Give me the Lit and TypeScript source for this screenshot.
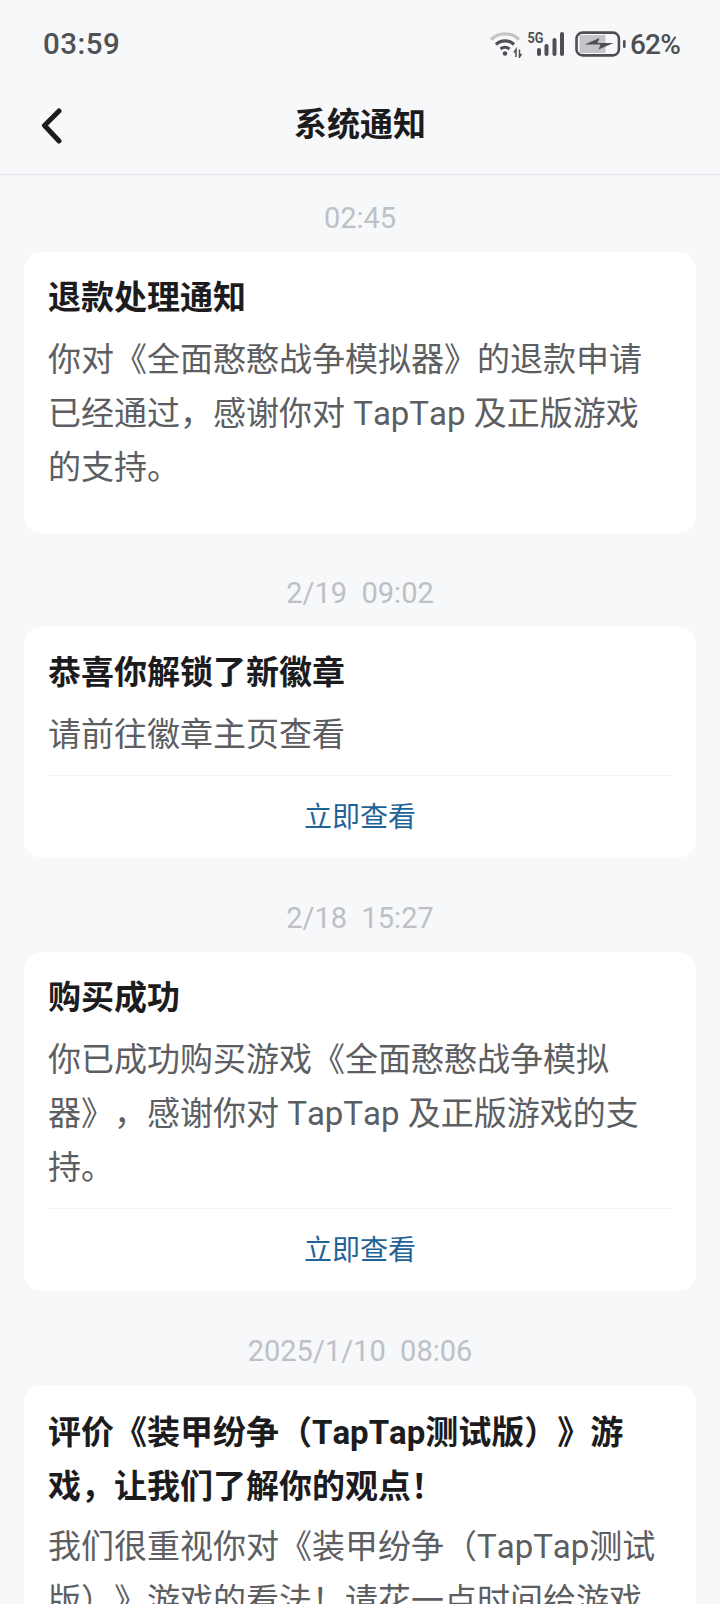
import { LitElement, html, css } from "lit";
import { customElement } from "lit/decorators.js";
import { classMap } from "lit/directives/class-map.js";

interface Item {
  time: string;
  title: string;
  body: string;
  link?: boolean;
  mixed?: boolean;
}

const ITEMS: Item[] = [
  {
    time: "02:45",
    title: "退款处理通知",
    body: "你对《全面憨憨战争模拟器》的退款申请已经通过，感谢你对 TapTap 及正版游戏的支持。",
  },
  { time: "2/19  09:02", title: "恭喜你解锁了新徽章", body: "请前往徽章主页查看", link: true },
  {
    time: "2/18  15:27",
    title: "购买成功",
    body: "你已成功购买游戏《全面憨憨战争模拟器》，感谢你对 TapTap 及正版游戏的支持。",
    link: true,
  },
  {
    time: "2025/1/10  08:06",
    title: "评价《装甲纷争（TapTap测试版）》游戏，让我们了解你的观点！",
    body: "我们很重视你对《装甲纷争（TapTap测试版）》游戏的看法！请花一点时间给游戏评价吧。",
    mixed: true,
  },
];

@customElement("app-root")
export class AppRoot extends LitElement {
  static styles = css`
    :host {
      display: block;
      height: 1604px;
      overflow: hidden;
      background: #f7f8fa;
      font-family: "Roboto", "Noto Sans CJK SC", sans-serif;
      text-spacing-trim: space-all;
      font-kerning: none;
    }
    .status {
      height: 88px;
      display: flex;
      align-items: center;
      justify-content: space-between;
      padding: 0 40px 0 43px;
      color: #4d4f52;
    }
    .clock {
      font-size: 29.5px;
      font-weight: 500;
      letter-spacing: 0.5px;
      color: #505255;
    }
    .icons {
      display: flex;
      align-items: center;
      gap: 3px;
    }
    .pct {
      font-size: 28px;
      font-weight: 500;
      letter-spacing: -0.8px;
    }
    .nav {
      height: 87px;
      box-sizing: border-box;
      border-bottom: 1px solid #e6e7ea;
      display: flex;
      align-items: center;
      justify-content: center;
      position: relative;
      padding-bottom: 18px;
    }
    .back {
      position: absolute;
      left: 40px;
      top: 18px;
    }
    .nav-title {
      font-size: 33px;
      font-weight: 700;
      color: #1c1c1e;
    }
    .list {
      padding: 0 24px;
    }
    .time {
      height: 77px;
      box-sizing: border-box;
      padding-top: 8px;
      display: flex;
      align-items: center;
      justify-content: center;
      white-space: pre;
      font-size: 29px;
      color: #bdc1c7;
    }
    .card {
      background: #fff;
      border-radius: 18px;
      margin-bottom: 17px;
      padding: 19px 24px 0;
    }
    .title {
      font-size: 33px;
      line-height: 54px;
      font-weight: 700;
      color: #1c1c1e;
      padding-right: 4px;
    }
    .title.mixed {
      padding-top: 2px;
      margin-bottom: -2px;
    }
    .body {
      font-size: 33px;
      line-height: 54px;
      color: #5c5e62;
      padding: 8px 4px 0 0;
    }
    .plain {
      height: 38px;
    }
    .link {
      margin-top: 13px;
      border-top: 1px solid #f0f1f3;
      height: 83px;
      box-sizing: border-box;
      padding-bottom: 5px;
      display: flex;
      align-items: center;
      justify-content: center;
      font-size: 28px;
      color: #1f6397;
    }
  `;

  render() {
    return html`
      <div class="status">
        <span class="clock">03:59</span>
        <div class="icons">
          <svg width="140" height="28" viewBox="0 0 140 28">
            <path d="M4 9.5 A 20 20 0 0 1 32 9.5" fill="none" stroke="#c4c5c7" stroke-width="3.2"/>
            <path d="M9 14.5 A 13 13 0 0 1 27 14.5" fill="none" stroke="#4d4f52" stroke-width="3.2"/>
            <path d="M13.5 19 A 7 7 0 0 1 22.5 19" fill="none" stroke="#4d4f52" stroke-width="3"/>
            <circle cx="18" cy="23.5" r="2.3" fill="#4d4f52"/>
            <path d="M29 27V19.5l-2 3M32.5 19.5v7.5l2-3" fill="none" stroke="#4d4f52" stroke-width="1.5"/>
            <text x="40.5" y="13" font-size="14" font-weight="700" fill="#4d4f52" font-family="Roboto" textLength="16" lengthAdjust="spacingAndGlyphs">5G</text>
            <rect x="50" y="18" width="4" height="8" rx="2" fill="#4d4f52"/>
            <rect x="57.5" y="14" width="4" height="12" rx="2" fill="#4d4f52"/>
            <rect x="65.5" y="8" width="4" height="18" rx="2" fill="#4d4f52"/>
            <rect x="73" y="2" width="4" height="24" rx="2" fill="#4d4f52"/>
            <rect x="89.5" y="2.6" width="42.4" height="22.8" rx="6" fill="none" stroke="#4d4f52" stroke-width="2.6"/>
            <path d="M92.5 5h26v18h-26z" fill="#c4c5c7"/>
            <path d="M97.5 14.5l15-6.5-2 5h16l-15 6.5 2-5z" fill="#4d4f52"/>
            <rect x="136" y="10" width="2.6" height="8" rx="1.3" fill="#4d4f52"/>
          </svg>
          <span class="pct">62%</span>
        </div>
      </div>
      <div class="nav">
        <svg class="back" width="24" height="38" viewBox="0 0 24 38">
          <path d="M19 5 L4.5 19.5 L19 35" fill="none" stroke="#1c1c1e" stroke-width="5" stroke-linecap="round" stroke-linejoin="round"/>
        </svg>
        <span class="nav-title">系统通知</span>
      </div>
      <div class="list">
        ${ITEMS.map(
          (it) => html`
            <div class="time">${it.time}</div>
            <div class="card">
              <div class=${classMap({ title: true, mixed: !!it.mixed })}>${it.title}</div>
              <div class="body">${it.body}</div>
              ${it.link
                ? html`<div class="link">立即查看</div>`
                : html`<div class="plain"></div>`}
            </div>
          `
        )}
      </div>
    `;
  }
}
